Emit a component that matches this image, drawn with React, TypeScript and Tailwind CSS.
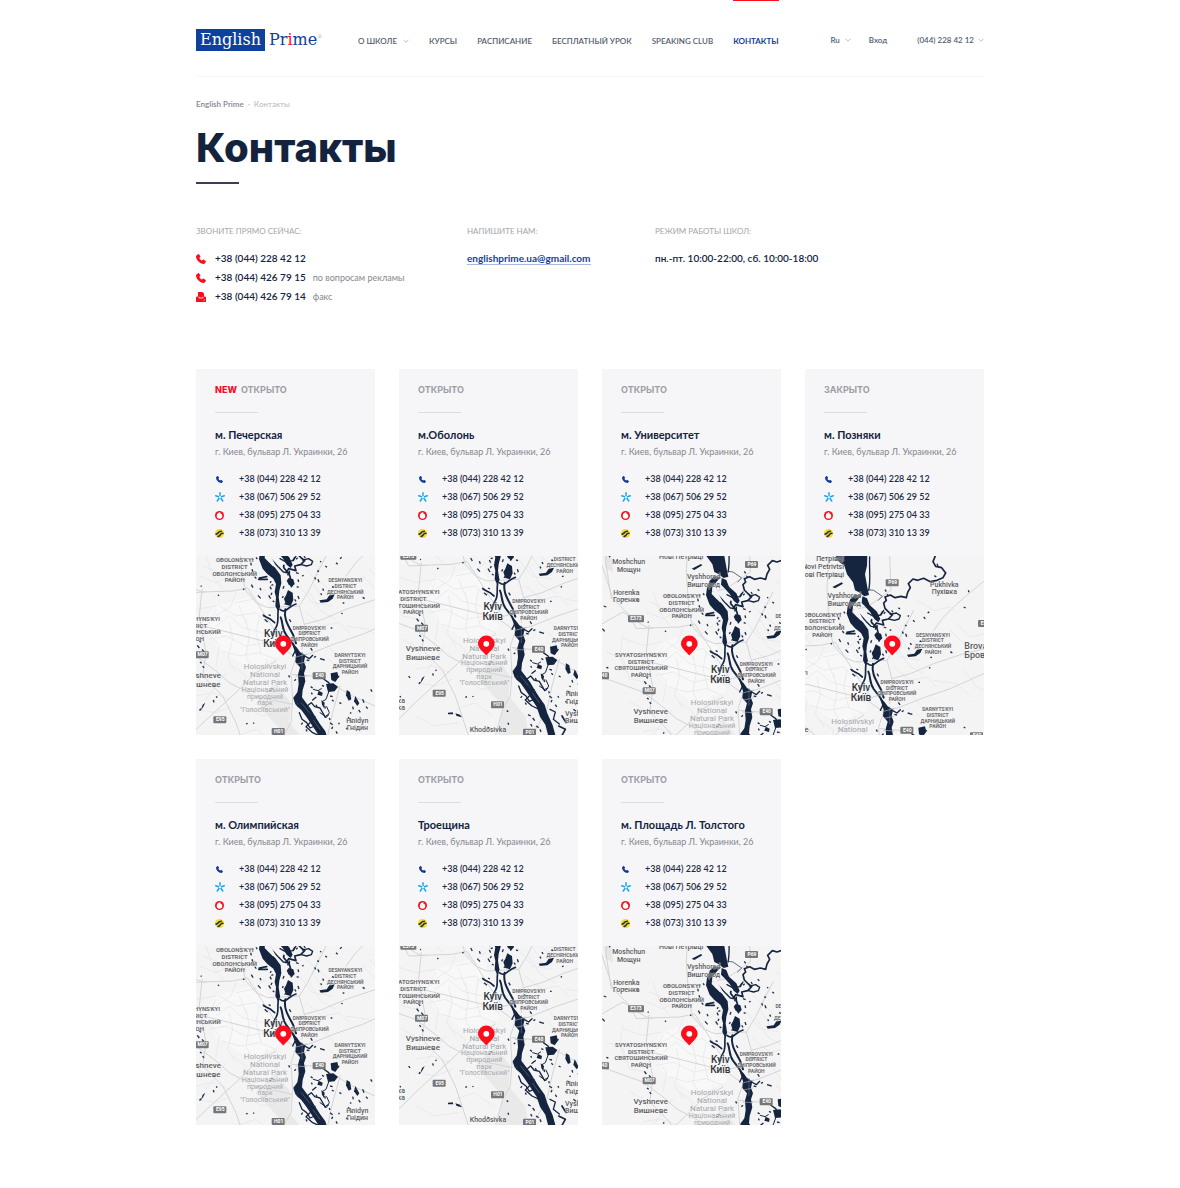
import React from "react";

type Lines = string[];

/* ---------- city map (one shared plan, each card shows a different part) ---------- */

type MapLabel = { x: number; y: number; step: number; size: number; color: string; lines: Lines; weight?: number; anchor?: "start" | "middle" | "end" };

const DISTRICT = "#6a6b6e";
const TOWN = "#5c5d60";
const PARK = "#a3a5a8";

const mapLabels: MapLabel[] = [
  { x: 116, y: 19, step: 20, size: 6, color: DISTRICT, weight: 700, lines: ["OBOLONS'KYI", "DISTRICT", "ОБОЛОНСЬКИЙ", "РАЙОН"] },
  { x: -6, y: 195, step: 20, size: 6, color: DISTRICT, weight: 700, lines: ["SVYATOSHYNS'KYI", "DISTRICT", "СВЯТОШИНСЬКИЙ", "РАЙОН"] },
  { x: 448, y: 79, step: 17, size: 5, color: DISTRICT, weight: 700, lines: ["DESNYANS'KYI", "DISTRICT", "ДЕСНЯНСЬКИЙ", "РАЙОН"] },
  { x: 340, y: 221, step: 17, size: 5, color: DISTRICT, weight: 700, lines: ["DNIPROVS'KYI", "DISTRICT", "ДНІПРОВСЬКИЙ", "РАЙОН"] },
  { x: 462, y: 303, step: 17, size: 5, color: DISTRICT, weight: 700, lines: ["DARNYTS'KYI", "DISTRICT", "ДАРНИЦЬКИЙ", "РАЙОН"] },
  { x: 207, y: 340, step: 24, size: 8, color: PARK, lines: ["Holosiivskyi", "National", "Natural Park"] },
  { x: 207, y: 408, step: 20, size: 7, color: PARK, lines: ["Національний", "природний", "парк", '"Голосіївський"'] },
  { x: 232, y: 242, step: 31, size: 10, color: "#333438", weight: 500, lines: ["Kyiv", "Київ"] },
  { x: 23, y: 366, step: 26, size: 8, color: TOWN, weight: 500, lines: ["Vyshneve", "Вишневе"] },
  { x: -43, y: -83, step: 22, size: 7, color: TOWN, weight: 500, lines: ["Moshchun", "Мощун"] },
  { x: -50, y: 8, step: 22, size: 7, color: TOWN, weight: 500, lines: ["Horenka", "Горенка"] },
  { x: 182, y: -38, step: 24, size: 7, color: TOWN, weight: 500, lines: ["Vyshhorod", "Вишгород"] },
  { x: 482, y: -70, step: 21, size: 7, color: TOWN, weight: 500, lines: ["Pukhivka", "Пухівка"] },
  { x: 181, y: -147, step: 24, size: 7, color: TOWN, weight: 500, anchor: "end", lines: ["Петрівці", "Novi Petrivtsi", "Нові Петрівці"] },
  { x: 542, y: 116, step: 28, size: 9, color: TOWN, weight: 500, anchor: "start", lines: ["Brovary", "Бровари"] },
  { x: 484, y: 501, step: 22, size: 7, color: TOWN, weight: 500, lines: ["Hnidyn", "Гнідин"] },
  { x: 449, y: 560, step: 22, size: 7, color: TOWN, weight: 500, anchor: "start", lines: ["Vyshenky", "Вишеньки"] },
  { x: 218, y: 607, step: 22, size: 7, color: TOWN, weight: 500, lines: ["Khodosivka"] },
  { x: -31, y: 521, step: 22, size: 7, color: TOWN, weight: 500, anchor: "end", lines: ["Боярка", "Boiarka"] },
];

const shields: [number, number, string][] = [
  [20, 295, "M07"], [73, 490, "E95"], [248, 525, "H01"], [371, 358, "E40"], [-21, 79, "E373"],
  [327, -84, "P69"], [344, 607, "P01"], [-120, 250, "E40"], [580, 375, "E40"], [604, 38, "E95"],
];

const majorRoads = [
  "M-140 105L-60 60L0 100L18 108L110 105L155 96L215 190L262 262L300 250",
  "M-140 250L0 300L60 345L100 380L175 420L290 445",
  "M240 315L180 350L130 400L0 520L-60 580L-120 640",
  "M0 205L70 222L190 252L240 262L300 305L350 290L420 262L500 235L600 190",
  "M135 -163L130 -60L138 60L150 105L180 140L215 155L310 150L325 205L318 280",
  "M318 -163L322 -60L250 -10L200 0",
  "M300 305L285 350L290 430L285 500L262 540L240 620",
  "M290 355L370 362L470 420L604 480",
  "M325 205L380 190L450 160L540 130L604 115",
  "M390 0L335 110L310 150",
  "M-123 -80L-90 20L-40 70L-20 110L30 108",
  "M-100 -163L-112 -90L-95 20",
  "M432 390L410 470L395 540L350 620",
  "M18 100L10 180L30 290L20 360L80 420L120 500L160 620",
  "M604 -90L520 -20L480 20L450 60",
];

const minorRoads = [
  "M70 150L120 180L180 170L210 200M60 210L100 180L140 215L200 230",
  "M40 250L90 240L150 270L210 260L250 280M80 285L130 300L190 290L240 310",
  "M100 200L110 250L95 310L120 350M150 190L160 240L150 300L170 340",
  "M60 160L30 220L70 270L60 330M130 150L150 200M190 180L180 230L195 290",
  "M-60 140L0 160L60 150M-110 180L-60 200L-40 260L10 270M-60 130L-70 190L-50 240",
  "M330 170L380 210L430 200L460 230M350 60L400 100L430 70M340 230L390 260L420 300",
  "M310 90L350 140L410 150M370 30L350 80L380 130M400 310L430 340L500 330",
  "M340 110L375 165L420 190M330 40L360 70M450 210L520 220L560 260",
  "M110 330L150 360L140 410M210 310L230 360L260 380M90 350L60 390L30 430",
  "M0 420L50 410L100 430M-40 330L0 350L20 390M0 460L60 470L110 450",
  "M10 60L60 80L100 60L150 70M20 30L70 50L120 30M30 0L50 60L80 100",
  "M400 -30L450 0L500 -10M520 40L560 80L604 70M500 60L540 100M540 180L580 230L604 240",
  "M160 460L200 480L250 470M120 540L180 520L230 560M0 560L60 590L130 580",
  "M120 110L105 150L60 180M160 110L200 150M210 100L170 130L120 140",
];

const waterAreas = [
  "M155 -166L251 -166L250 -134L244 -108L252 -64L256 -46L242 -42L226 -54L214 -60L208 -84L190 -108L182 -134L160 -150Z",
  "M213 -47L234 -45L222 -32L208 -14L206 6L220 20L238 36L254 58L256 82L250 104L248 124L252 150L246 166L238 150L240 124L236 108L240 84L232 68L214 54L200 38L189 10L192 -12L200 -34Z",
  "M288 262L302 274L312 288L328 298L324 318L330 334L324 352L328 376L320 402L318 424L330 440L344 458L358 482L372 504L388 526L396 552L412 588L422 624L400 624L390 586L374 562L364 532L344 502L332 484L316 462L302 450L294 430L304 410L308 384L306 356L312 334L298 318L300 298Z",
  "M236 -42L250 -36L258 -16L280 4L290 26L284 36L272 26L260 6L244 -12L234 -22Z",
  "M278 66L292 70L296 84L288 92L278 86L272 74Z",
  "M276 102L290 110L292 132L284 150L270 146L264 128L270 118Z",
  "M370 133L392 130L400 118L416 115L410 128L396 138L374 140Z",
  "M404 352L424 348L428 364L418 378L406 372Z",
  "M390 384L412 382L426 392L416 406L396 408Z",
  "M452 402L462 408L466 430L458 434L450 418Z",
  "M368 404L380 410L378 420L364 416Z",
  "M98 550L112 549L114 555L98 555ZM120 552L134 556L140 564L124 560Z",
  "M20 446L28 440L22 452L14 464Z",
  "M478 420L490 442L484 450L474 436Z",
  "M146 -70L174 -84L178 -80L154 -66Z",
  "M376 432L386 440L384 456L378 446Z",
];

const channels: [string, number][] = [
  ["M250 150C240 175 252 195 240 214L228 236", 5],
  ["M252 160C268 175 278 150 300 144", 5],
  ["M268 160C262 190 278 210 292 238L300 262", 6],
  ["M254 184C262 200 256 216 270 236L290 262L302 285", 6],
  ["M204 180L224 190L236 200", 5],
  ["M212 62L190 66M188 70L214 70", 5],
  ["M216 0C224 8 234 18 248 34L262 48L280 50", 4],
  ["M280 46C276 60 290 66 286 92", 5],
  ["M284 -30L296 -42L270 -60L256 -62", 2],
  ["M255 -60C262 -90 256 -120 258 -160", 4],
  ["M270 50L278 38L300 44L296 30L314 26L326 14L316 6L304 -6L300 -22L308 -30L304 -40L320 -46L334 -38L352 -42L368 -38L372 -54L380 -68L374 -80L388 -94L402 -90L420 -96L440 -86L460 -90L478 -98L486 -112L474 -128L456 -132L448 -146L456 -166", 5],
  ["M316 26L332 30L346 26L350 16L338 8L320 12", 4],
  ["M264 28C256 40 280 42 276 56", 5],
  ["M248 -30L256 -6L276 12", 3],
  ["M300 444L294 426L306 410", 4],
  ["M310 470L318 490L332 500L342 516L356 510", 4],
  ["M342 500L330 512L350 530L372 540", 4],
  ["M336 448L346 440L356 452L372 456L388 484", 4],
  ["M372 470L392 484L400 470L392 452", 3],
  ["M404 540L420 548L414 570L432 584", 4],
  ["M352 400L366 404L376 398M398 408L390 430L380 436", 3],
  ["M360 424L350 432M384 370L398 380L404 392", 4],
  ["M300 280L290 300M326 300L340 308L350 298", 4],
  ["M300 0L292 14M252 8L270 18L290 14L296 4", 4],
  ["M430 590L450 600L440 618M440 560L452 580", 5],
];

const speckle =
  "M300 50l8 3M306 70l2 8M318 60l5 -2M302 92l6 2M306 120l3 9M296 130l4 6M222 92l4 8M228 110l-3 7M218 118l6 10M230 134l5 4M226 76l-4 4M232 86l-6 2M206 190l9 8M200 176l8 5M218 176l6 3M280 190l5 8M312 210l3 6M326 226l8 5M404 216l5 0M344 276l5 8M354 304l6 -3M372 308l14 4M332 312l8 2M300 370l-5 4M278 358l3 6M378 388l6 3M344 392l6 4M430 360l-6 3M346 410l3 5M402 420l8 2M408 432l5 4M386 450l2 8M360 446l3 7M356 480l3 9M470 452l2 8M488 462l5 7M480 430l3 6M462 470l4 2M402 500l8 6M410 512l-3 7M330 520l3 6M308 440l-6 5M340 470l5 7M428 500l2 5M420 526l4 7M66 116l3 3M142 98l2 4M168 12l4 -4M52 432l2 7M60 424l4 -2M226 396l4 3M220 404l5 0M150 504l5 -2M172 500l2 3M14 458l-3 6M20 330l4 6M12 318l5 4M274 544l5 3M278 580l2 6M216 594l6 2M364 44l5 3M372 16l4 2M388 30l5 4M356 64l3 6M420 20l5 5M432 8l5 -4M380 98l3 6M374 112l3 5M366 70l3 9M408 92l6 2M440 142l5 -2M500 124l6 4M436 172l4 1M540 -10l6 3M554 -60l2 6M452 -104l6 4M460 -140l3 8M304 -62l4 6M310 -48l5 4M324 0l4 6M344 -8l5 4M300 10l5 -5M164 20l2 8M168 40l3 9M176 62l5 6M166 86l5 9M192 96l3 7M186 118l8 9M180 4l4 5M264 90l-3 8M262 120l-3 6M270 140l-4 6M-80 -116l4 6M-108 -132l4 10M-98 -112l-3 8M-60 20l5 2M-20 22l6 6M-118 42l8 3M-122 110l7 8M-110 226l6 2M10 254l5 5M4 268l6 8M18 280l6 7M-20 440l4 6M-80 470l5 3M-46 500l2 4M14 90l3 1M338 556l8 4M352 566l6 8M346 584l4 7M362 590l8 5M374 600l3 8M390 480l8 -4M400 486l2 6M320 500l-4 6M430 440l6 3M456 484l6 6M466 496l4 4M450 516l6 4M474 540l8 6M500 560l3 10M500 430l4 10M510 452l5 6M524 400l4 7M540 350l5 3";

const SPAN = 537;

function inView(left: number, right: number, top: number, bottom: number, x: number, y: number) {
  return right > x + 6 && left < x + SPAN - 6 && bottom > y + 4 && top < y + SPAN - 4;
}

function lineInView(l: MapLabel, line: string, baseline: number, x: number, y: number) {
  const w = line.length * l.size * 1.8;
  const left = l.anchor === "start" ? l.x : l.anchor === "end" ? l.x - w : l.x - w / 2;
  return inView(left, left + w, baseline - l.size * 2.1, baseline, x, y);
}

function CityMap({ x, y, title }: { x: number; y: number; title: string }) {
  const s = 1 / 3;
  return (
    <svg viewBox="0 0 179 179" role="img" aria-label={title} className="block aspect-square w-full overflow-hidden bg-[#f4f4f5]">
      <g transform={`translate(${-x * s} ${-y * s})`}>
        <g transform="scale(0.33333)" fill="none" strokeLinejoin="round" strokeLinecap="round">
          <path d="M240 380L285 440L280 500L330 560L340 625L245 625L262 530L180 440Z" fill="#e9e9ea" />
          <path d="M60 150L200 110L240 210L250 300L160 340L60 270L20 200Z" fill="#f8f8f8" />
          <path d="M-123 -150L-100 -160L-90 -60L-112 -70Z" fill="#e6e6e7" />
          {minorRoads.map((d) => (
            <path key={d} d={d} stroke="#e3e4e5" strokeWidth="2" />
          ))}
          {majorRoads.map((d) => (
            <path key={d} d={d} stroke="#d3d4d6" strokeWidth="3" />
          ))}
          {waterAreas.map((d) => (
            <path key={d} d={d} fill="#16253f" />
          ))}
          {channels.map(([d, w]) => (
            <path key={d} d={d} stroke="#16253f" strokeWidth={w} />
          ))}
          <path d="M212 -2L218 -12L228 8L238 26L230 30L218 14Z" fill="#f4f4f5" />
          <path d="M318 290L318 340M316 440L340 470M352 492L372 520" stroke="#5d687c" strokeWidth="2" />
          <path d="M300 303L332 294M302 324L330 318M300 360L330 362" stroke="#aab0b8" strokeWidth="2" />
          <path d={speckle} stroke="#22304a" strokeWidth="4" strokeLinecap="butt" />
        </g>
        {mapLabels.map((l) => (
          <text
            key={l.lines[0]}
            fontFamily="Roboto, sans-serif"
            fontSize={l.size}
            fontWeight={l.weight ?? 400}
            fill={l.color}
            stroke="#f6f6f7"
            strokeOpacity="0.5"
            strokeWidth="1"
            paintOrder="stroke"
            textAnchor={l.anchor ?? "middle"}
          >
            {l.lines.map((line, i) =>
              lineInView(l, line, l.y + i * l.step, x, y) ? (
                <tspan key={line} x={l.x * s} y={(l.y + i * l.step) * s}>
                  {line}
                </tspan>
              ) : null,
            )}
          </text>
        ))}
        {shields
          .filter(([sx, sy]) => inView(sx - 21, sx + 21, sy - 9, sy + 12, x, y))
          .map(([sx, sy, t]) => (
            <g key={t + sx}>
              <rect x={sx * s - (t.length > 3 ? 8 : 7)} y={sy * s - 3} width={t.length > 3 ? 16 : 13} height="7" rx="1" fill="#75777a" />
              <text x={sx * s} y={sy * s + 2} fontFamily="Roboto, sans-serif" fontSize="5" fontWeight="700" fill="#fff" textAnchor="middle">
                {t}
              </text>
            </g>
          ))}
      </g>
      <path d="M87.300 99.500C84.500 96 79 92.500 79 87.800A8.300 8.300 0 0 1 95.600 87.800C95.600 92.500 90.100 96 87.300 99.500Z" fill="#fd0d1b" />
      <circle cx="87.300" cy="87.800" r="2.900" fill="#fff" />
    </svg>
  );
}

/* ---------- icons ---------- */

function Handset({ className }: { className: string }) {
  return (
    <svg viewBox="0 0 20 20" fill="currentColor" aria-hidden="true" className={className}>
      <path d="M1 2.800L4.300.3c.6-.4 1.300-.3 1.700.3l2.600 3.900c.4.6.3 1.200-.2 1.700L6.700 7.900c1 2.300 2.900 4.200 5.200 5.300l1.900-1.600c.5-.4 1.200-.5 1.700-.1l3.800 2.700c.6.4.7 1.100.3 1.700l-2.200 3.100c-.4.6-1 .9-1.700.8C7.500 19.200.8 12.500 0 4.800-.1 4 .3 3.300 1 2.800Z" />
    </svg>
  );
}

function Fax() {
  return (
    <svg viewBox="0 0 20 20" aria-hidden="true" className="size-[10px] text-[#fb0d1b]">
      <path d="M4 0h9l3 3v6h1.500A2.500 2.500 0 0 1 20 11.500V20H0v-8.500A2.500 2.500 0 0 1 2.500 9H4Z" fill="currentColor" />
      <path d="M6 9.500V12H14V9.500" fill="none" stroke="#fff" strokeWidth="1.600" />
      <circle cx="16.500" cy="16" r="1.200" fill="#fff" />
    </svg>
  );
}

function Kyivstar() {
  return (
    <svg viewBox="0 0 20 20" aria-hidden="true" className="size-[10px]" stroke="#1ea4ea" strokeWidth="3" strokeLinecap="round">
      <path d="M10 7V1.500M13 9.500L18.500 7.500M12 13L15.500 18M8 13L4.500 18M7 9.500L1.500 7.500" />
    </svg>
  );
}

function Vodafone() {
  return (
    <svg viewBox="0 0 20 20" aria-hidden="true" className="size-[9px]">
      <circle cx="10" cy="10" r="10" fill="#f5101c" />
      <path d="M12.500 2C7.500 2.500 3.800 6.500 3.800 11a6.200 6.200 0 0 0 12.400 0C16.200 7.800 14 6 11 5.200c0-1.200.5-2.400 1.500-3.200Z" fill="#fff" />
    </svg>
  );
}

function Lifecell() {
  return (
    <svg viewBox="0 0 20 20" aria-hidden="true" className="size-[9px]">
      <circle cx="10" cy="10" r="10" fill="#f6dc1b" />
      <path d="M2.500 11.500C5 11.500 6 10 7.500 8S11 5 14 5M7 16.500C9 16.500 10.500 15 12 12.500S14.500 10 17.500 9.500" fill="none" stroke="#17306b" strokeWidth="3.600" strokeLinecap="round" />
    </svg>
  );
}

function Chevron() {
  return (
    <svg viewBox="0 0 12 8" aria-hidden="true" className="w-[6px] text-[#b9bfca]" fill="none" stroke="currentColor" strokeWidth="2">
      <path d="M1 1.500L6 6.500L11 1.500" />
    </svg>
  );
}

/* ---------- data ---------- */

const branchPhones = [
  { n: "+38 (044) 228 42 12", icon: <Handset className="mt-px ml-px size-[7px] text-[#123c97]" /> },
  { n: "+38 (067) 506 29 52", icon: <Kyivstar /> },
  { n: "+38 (095) 275 04 33", icon: <Vodafone /> },
  { n: "+38 (073) 310 13 39", icon: <Lifecell /> },
];

const branches = [
  { name: "м. Печерская", status: "ОТКРЫТО", fresh: true, x: 0, y: 0 },
  { name: "м.Оболонь", status: "ОТКРЫТО", x: -49, y: 80 },
  { name: "м. Университет", status: "ОТКРЫТО", x: -123, y: -108 },
  { name: "м. Позняки", status: "ЗАКРЫТО", x: 64, y: -163 },
  { name: "м. Олимпийская", status: "ОТКРЫТО", x: 0, y: 0 },
  { name: "Троещина", status: "ОТКРЫТО", x: -49, y: 80 },
  { name: "м. Площадь Л. Толстого", status: "ОТКРЫТО", x: -123, y: -108 },
];

const tel = (n: string) => "tel:" + n.replace(/[^+\d]/g, "");

function BranchCard({ b }: { b: (typeof branches)[number] }) {
  return (
    <article className="bg-[#f6f6f9]">
      <div className="px-[19px] pt-[15px] pb-[14px]">
        <p className="flex gap-1 font-['Inter'] text-[9px] leading-3 font-bold text-[#9c9ea6]">
          {b.fresh && <span className="font-extrabold text-[#fb0d1b]">NEW</span>}
          {b.status}
        </p>
        <div className="mt-4 h-px w-[43px] bg-[#dcdde1]" />
        <h2 className="mt-[14px] text-[11px] leading-4 font-bold whitespace-nowrap text-[#14233d]">{b.name}</h2>
        <p className="mt-px text-[9px] leading-4 whitespace-nowrap text-[#85878d]">г. Киев, бульвар Л. Украинки, 26</p>
        <ul className="mt-[10px]">
          {branchPhones.map((p) => (
            <li key={p.n} className="flex h-[18px] items-center">
              <span className="flex w-6 shrink-0">{p.icon}</span>
              <a href={tel(p.n)} className="text-[9px] leading-3 font-semibold whitespace-nowrap text-[#1d2b45]">
                {p.n}
              </a>
            </li>
          ))}
        </ul>
      </div>
      <CityMap x={b.x} y={b.y} title={"Карта: " + b.name} />
    </article>
  );
}

function Heading({ children }: { children: React.ReactNode }) {
  return <h2 className="text-[8px] leading-3 font-normal text-[#a4a6ac]">{children}</h2>;
}

export default function App() {
  return (
    <div className="min-h-screen bg-white px-4 pb-16 font-['Lato','Open_Sans',sans-serif] text-[#14233d]">
      <div className="mx-auto max-w-[788px]">
        <header className="flex h-[77px] items-start border-b border-[#f5f5f6] text-[8px] leading-3 font-semibold text-[#545d6e]">
          <a href="#home" className="mt-[29px] flex w-[162px] items-center font-['DejaVu_Serif'] text-[16px] leading-[22px] font-normal text-[#0d419b]">
            <span className="bg-[#0d419b] px-1 text-white">English</span>
            <span className="pl-1">
              Pr<span className="text-[#fb0d1b]">i</span>me
            </span>
            <span className="self-start text-[5px] leading-[14px] text-[#9db4da]">®</span>
          </a>
          <nav className="flex gap-5 whitespace-nowrap">
            <button className="flex items-center gap-[6px] pt-[35px] font-semibold">
              О ШКОЛЕ <Chevron />
            </button>
            <a href="#courses" className="pt-[35px]">КУРСЫ</a>
            <a href="#schedule" className="pt-[35px]">РАСПИСАНИЕ</a>
            <a href="#free" className="pt-[35px]">БЕСПЛАТНЫЙ УРОК</a>
            <a href="#club" className="pt-[35px]">SPEAKING CLUB</a>
            <a href="#contacts" aria-current="page" className="border-t border-[#fb0d1b] pt-[34px] font-bold text-[#123f98]">КОНТАКТЫ</a>
          </nav>
          <div className="ml-auto flex pt-[34px] whitespace-nowrap">
            <button className="flex items-center gap-[5px] font-semibold">
              Ru <Chevron />
            </button>
            <a href="#login" className="ml-[18px]">Вход</a>
            <button className="ml-[30px] flex items-center gap-1 font-semibold">
              (044) 228 42 12 <Chevron />
            </button>
          </div>
        </header>

        <main>
          <nav aria-label="breadcrumb" className="mt-[21px] flex gap-1 text-[8px] leading-3">
            <a href="#home" className="font-semibold text-[#7f8590]">English Prime</a>
            <span className="text-[#b4b7bd]">·</span>
            <span className="text-[#b4b7bd]">Контакты</span>
          </nav>
          <h1 className="mt-[14px] font-['Inter'] text-[40px] leading-[48px] font-extrabold">Контакты</h1>
          <div className="mt-[10px] h-[2px] w-[43px] bg-[#3a3f55]" />

          <section className="mt-[41px] grid grid-cols-[271px_188px_1fr] text-[10px] leading-[19px] font-semibold">
            <div>
              <Heading>ЗВОНИТЕ ПРЯМО СЕЙЧАС:</Heading>
              <ul className="mt-3">
                <li className="flex items-center">
                  <span className="w-[19px]"><Handset className="size-[10px] text-[#fb0d1b]" /></span>
                  <a href="tel:+380442284212">+38 (044) 228 42 12</a>
                </li>
                <li className="flex items-center">
                  <span className="w-[19px]"><Handset className="size-[10px] text-[#fb0d1b]" /></span>
                  <a href="tel:+380444267915">+38 (044) 426 79 15</a>
                  <span className="ml-[7px] text-[9px] font-normal text-[#85878d]">по вопросам рекламы</span>
                </li>
                <li className="flex items-center">
                  <span className="w-[19px]"><Fax /></span>
                  <a href="tel:+380444267914">+38 (044) 426 79 14</a>
                  <span className="ml-[7px] text-[9px] font-normal text-[#85878d]">факс</span>
                </li>
              </ul>
            </div>
            <div>
              <Heading>НАПИШИТЕ НАМ:</Heading>
              <p className="mt-3">
                <a href="mailto:englishprime.ua@gmail.com" className="border-b border-[#a9b9dc] font-bold text-[#123f98]">
                  englishprime.ua@gmail.com
                </a>
              </p>
            </div>
            <div>
              <Heading>РЕЖИМ РАБОТЫ ШКОЛ:</Heading>
              <p className="mt-3">пн.-пт. 10:00-22:00, сб. 10:00-18:00</p>
            </div>
          </section>

          <section className="mt-[63px] grid grid-cols-4 gap-6">
            {branches.map((b) => (
              <BranchCard key={b.name} b={b} />
            ))}
          </section>
        </main>
      </div>
    </div>
  );
}
